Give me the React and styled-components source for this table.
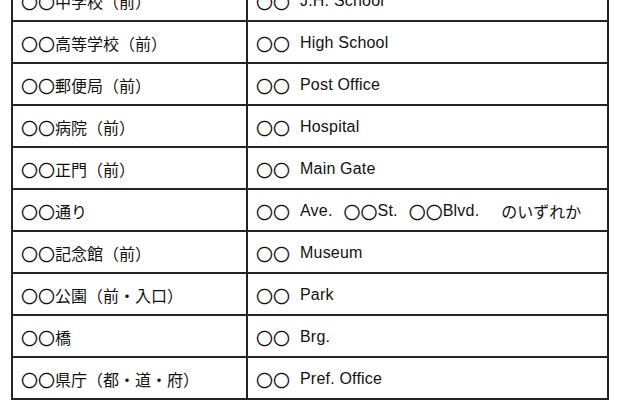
import React from "react";
import styled, { createGlobalStyle } from "styled-components";

const GlobalStyle = createGlobalStyle`
  html, body {
    margin: 0;
    padding: 0;
    background: #fff;
    overflow: hidden;
  }
`;

const Page = styled.div`
  width: 640px;
  height: 400px;
  overflow: hidden;
`;

const Grid = styled.div`
  display: grid;
  grid-template-columns: 235px 361px;
  width: max-content;
  margin: -22px 0 0 11px;
  border-left: 2px solid #232323;
  border-top: 2px solid #232323;
`;

const Cell = styled.div`
  box-sizing: border-box;
  height: 42px;
  display: flex;
  align-items: center;
  padding: 2px 0 0 8px;
  border-right: 2px solid #232323;
  border-bottom: 2px solid #232323;
  font-family: "Liberation Sans", "Noto Sans CJK JP", sans-serif;
  font-size: 16px;
  letter-spacing: 0.2px;
  color: #111;
  white-space: pre;
`;

const Mark = styled.span`
  font-family: "Noto Sans CJK JP", sans-serif;
  font-size: 16px;
  letter-spacing: 0;
`;

const Circles = styled.span`
  font-family: "Noto Sans CJK JP", sans-serif;
  font-size: 17px;
  letter-spacing: 0;
`;

const Gap = styled.span`
  display: inline-block;
  width: ${(p) => p.w}px;
`;

const rows = [
  { ja: "中学校（前）", en: "J.H. School" },
  { ja: "高等学校（前）", en: "High School" },
  { ja: "郵便局（前）", en: "Post Office" },
  { ja: "病院（前）", en: "Hospital" },
  { ja: "正門（前）", en: "Main Gate" },
  { ja: "通り", en: null },
  { ja: "記念館（前）", en: "Museum" },
  { ja: "公園（前・入口）", en: "Park" },
  { ja: "橋", en: "Brg." },
  { ja: "県庁（都・道・府）", en: "Pref. Office" },
];

function English({ text }) {
  if (text) {
    return (
      <>
        <Circles>〇〇</Circles>
        <Gap w={10} />
        {text}
      </>
    );
  }
  return (
    <>
      <Circles>〇〇</Circles>
      <Gap w={10} />
      Ave.
      <Gap w={11} />
      <Circles>〇〇</Circles>St.
      <Gap w={11} />
      <Circles>〇〇</Circles>Blvd.
      <Gap w={22} />
      <Mark>のいずれか</Mark>
    </>
  );
}

export default function App() {
  return (
    <Page>
      <GlobalStyle />
      <Grid>
        {rows.map((r, i) => (
          <React.Fragment key={i}>
            <Cell>
              <Circles>〇〇</Circles>
              <Mark>{r.ja}</Mark>
            </Cell>
            <Cell>
              <English text={r.en} />
            </Cell>
          </React.Fragment>
        ))}
      </Grid>
    </Page>
  );
}
